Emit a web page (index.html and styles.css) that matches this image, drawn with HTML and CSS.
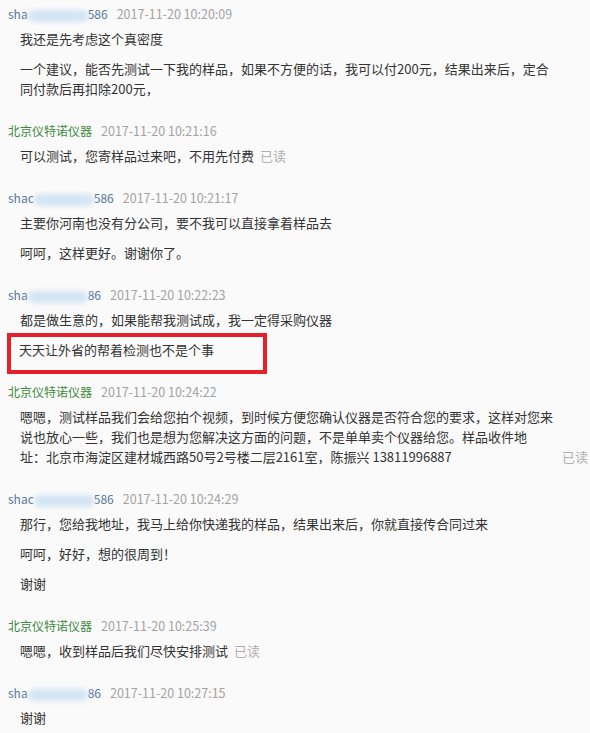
FILE: index.html
```html
<!DOCTYPE html>
<html lang="zh-CN">
<head>
	<meta charset="UTF-8">
	<title>聊天记录</title>
	<link rel="stylesheet" href="styles.css">
</head>
<body>

	<div id="chat">
		<div class="group">
			<div class="head"><span class="name buyer">sha<i class="blur"></i>586</span><span class="time">2017-11-20 10:20:09</span></div>
			<p>我还是先考虑这个真密度</p>
			<p>一个建议，能否先测试一下我的样品，如果不方便的话，我可以付200元，结果出来后，定合同付款后再扣除200元，</p>
		</div>

		<div class="group">
			<div class="head"><span class="name seller">北京仪特诺仪器</span><span class="time">2017-11-20 10:21:16</span></div>
			<p>可以测试，您寄样品过来吧，不用先付费<span class="read">已读</span></p>
		</div>

		<div class="group">
			<div class="head"><span class="name buyer">shac<i class="blur"></i>586</span><span class="time">2017-11-20 10:21:17</span></div>
			<p>主要你河南也没有分公司，要不我可以直接拿着样品去</p>
			<p>呵呵，这样更好。谢谢你了。</p>
		</div>

		<div class="group">
			<div class="head"><span class="name buyer">sha<i class="blur"></i>86</span><span class="time">2017-11-20 10:22:23</span></div>
			<p>都是做生意的，如果能帮我测试成，我一定得采购仪器</p>
			<div class="mark">
				<p>天天让外省的帮着检测也不是个事</p>
			</div>
		</div>

		<div class="group">
			<div class="head"><span class="name seller">北京仪特诺仪器</span><span class="time">2017-11-20 10:24:22</span></div>
			<p class="long"><span class="text">嗯嗯，测试样品我们会给您拍个视频，到时候方便您确认仪器是否符合您的要求，这样对您来说也放心一些，我们也是想为您解决这方面的问题，不是单单卖个仪器给您。样品收件地<br>址：北京市海淀区建材城西路50号2号楼二层2161室，陈振兴 13811996887</span><span class="read">已读</span></p>
		</div>

		<div class="group">
			<div class="head"><span class="name buyer">shac<i class="blur"></i>586</span><span class="time">2017-11-20 10:24:29</span></div>
			<p>那行，您给我地址，我马上给你快递我的样品，结果出来后，你就直接传合同过来</p>
			<p>呵呵，好好，想的很周到！</p>
			<p>谢谢</p>
		</div>

		<div class="group">
			<div class="head"><span class="name seller">北京仪特诺仪器</span><span class="time">2017-11-20 10:25:39</span></div>
			<p>嗯嗯，收到样品后我们尽快安排测试<span class="read">已读</span></p>
		</div>

		<div class="group">
			<div class="head"><span class="name buyer">sha<i class="blur"></i>86</span><span class="time">2017-11-20 10:27:15</span></div>
			<p>谢谢</p>
		</div>
	</div>

</body>
</html>
```

FILE: styles.css
```css
body{
	margin: 0;
	background-color: #fafafa;
	font-family: "Noto Sans CJK SC", "Liberation Sans", sans-serif;
	color: #333;
}
#chat{
	padding: 4px 0 0 8px;
}
.group{
	padding-bottom: 12px;
}
.head{
	height: 20px;
	line-height: 20px;
	font-size: 12px;
	margin-bottom: 5px;
	white-space: nowrap;
}
.name{
	margin-right: 9px;
}
.buyer{
	color: #56789e;
}
.seller{
	color: #3d8a3d;
}
.time{
	color: #a3a3a3;
	font-size: 12.5px;
}
.blur{
	display: inline-block;
	vertical-align: middle;
	width: 60px;
	height: 12px;
	border-radius: 6px;
	background-color: #d3e4f4;
	filter: blur(2.5px);
}
p{
	margin: 0 0 10px 12px;
	max-width: 537px;
	font-size: 13px;
	line-height: 20px;
}
.read{
	margin-left: 6px;
	color: #b0b0b0;
}
.long{
	display: flex;
	align-items: flex-end;
	max-width: none;
}
.long .text{
	width: 537px;
	flex-shrink: 0;
}
.long .read{
	margin-left: 5px;
}
.mark{
	width: 260px;
	box-sizing: border-box;
	margin: -7px 0 -4px -1px;
	padding: 3px 0 10px 0;
	border: 4px solid #e5202b;
}
.mark p{
	margin: 0 0 0 8px;
}
```
